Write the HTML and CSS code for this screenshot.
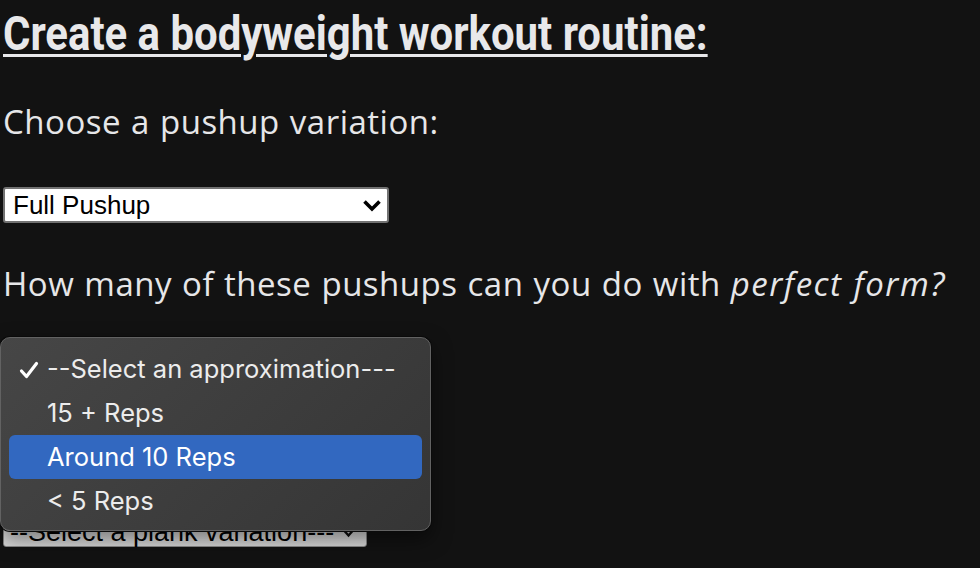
FILE: index.html
```html
<!DOCTYPE html>
<html>
<head>
<meta charset="utf-8">
<link rel="stylesheet" href="styles.css">
</head>
<body>
<main class="page">
  <h1 class="title"><span class="title-text">Create a bodyweight workout routine:</span></h1>

  <p class="question">Choose a pushup variation:</p>
  <div class="select select-white">
    <span class="select-value">Full Pushup</span>
    <svg class="chev" width="20" height="13" viewBox="0 0 20 13"><path d="M2.5 2.5 L10 10 L17.5 2.5" fill="none" stroke="#000" stroke-width="3.6"/></svg>
  </div>

  <p class="question">How many of these pushups can you do with <em>perfect form?</em></p>
  <div class="select select-white">
    <span class="select-value">--Select an approximation---</span>
    <svg class="chev" width="20" height="13" viewBox="0 0 20 13"><path d="M2.5 2.5 L10 10 L17.5 2.5" fill="none" stroke="#000" stroke-width="3.6"/></svg>
  </div>

  <p class="question">Choose a plank variation:</p>
  <div class="select select-grey">
    <span class="select-value">--Select a plank variation---</span>
    <svg class="chev-small" width="11" height="9" viewBox="0 0 11 9"><path d="M1.5 2 L5.5 6.5 L9.5 2" fill="none" stroke="#111" stroke-width="2.4"/></svg>
  </div>

  <div class="popup">
    <div class="opt opt-checked"><svg class="check" width="22" height="20" viewBox="0 0 22 20"><path d="M3.5 11 L8.5 16.5 L18.5 3.5" fill="none" stroke="#fff" stroke-width="3.2" stroke-linecap="round" stroke-linejoin="round"/></svg><span>--Select an approximation---</span></div>
    <div class="opt">15 + Reps</div>
    <div class="opt opt-active">Around 10 Reps</div>
    <div class="opt">&lt; 5 Reps</div>
  </div>
</main>
</body>
</html>
```
FILE: styles.css
```css
html, body {
  margin: 0;
  padding: 0;
  background: #121212;
}
body {
  min-height: 100vh;
}
.page {
  position: relative;
  padding: 0 3px;
  color: #e6e6e8;
  font-family: "Open Sans", sans-serif;
}
.title {
  margin: 0;
  padding-top: 6px;
  font-family: Roboto, sans-serif;
  font-weight: 700;
  font-size: 49px;
  line-height: 55px;
  white-space: nowrap;
}
.title-text {
  display: inline-block;
  text-decoration: underline;
  text-decoration-thickness: 3px;
  text-underline-offset: 4px;
  transform: scaleX(0.855);
  transform-origin: left center;
  color: #e8e8ea;
}
.question {
  margin: 39px 0 43px;
  font-size: 33px;
  line-height: 44px;
  letter-spacing: 0.5px;
  word-spacing: 1px;
  white-space: nowrap;
}
.question em {
  font-style: italic;
  letter-spacing: 1.5px;
}
.select {
  display: flex;
  align-items: center;
  justify-content: space-between;
  box-sizing: border-box;
  height: 36px;
  border-radius: 3px;
  color: #000;
  font-family: "Liberation Sans", Arial, sans-serif;
  font-size: 26px;
}
.select-white {
  width: 386px;
  background: #fff;
  border: 2px solid #727272;
  padding: 0 5px 0 8px;
}
.select-grey {
  width: 364px;
  align-items: flex-end;
  background: linear-gradient(#f6f6f6, #d8d8d8);
  border: 1px solid #8a8a8a;
  padding: 0 12px 0 6px;
  font-size: 27px;
  line-height: 27px;
}
.chev-small {
  margin-bottom: 8px;
}
.popup {
  position: absolute;
  left: 0;
  top: 337px;
  width: 431px;
  height: 194px;
  box-sizing: border-box;
  padding: 9px 8px;
  background: linear-gradient(135deg, #464646, #353535);
  border: 1px solid #626262;
  border-radius: 10px;
  box-shadow: 0 0 0 1px #0a0a0a, 0 8px 20px rgba(0,0,0,0.5);
  font-family: Inter, "Noto Sans", sans-serif;
  font-size: 25.5px;
  color: #ececec;
}
.opt {
  position: relative;
  height: 44px;
  line-height: 44px;
  padding-left: 38px;
  border-radius: 6px;
}
.opt-active {
  background: #3268c0;
  color: #fff;
}
.check {
  position: absolute;
  left: 9px;
  top: 13px;
}
```
